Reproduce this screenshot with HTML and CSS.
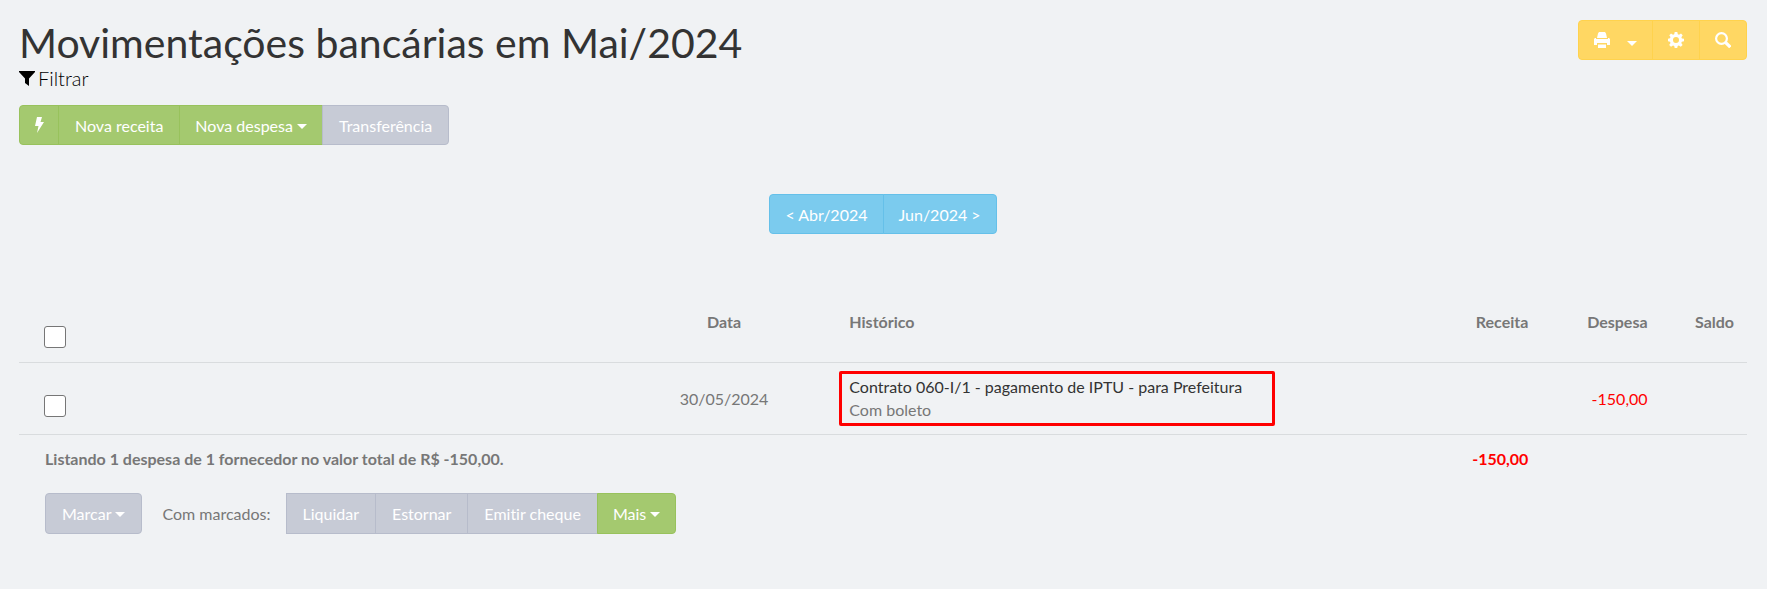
FILE: index.html
```html
<!DOCTYPE html>
<html lang="pt-BR">
<head>
<meta charset="utf-8">
<title>Movimentações bancárias</title>
<link rel="stylesheet" href="styles.css">
</head>
<body>
<main class="page">
  <header class="page-header">
    <div>
      <h1 class="title">Movimentações bancárias em Mai/2024</h1>
      <a class="filter" href="#"><svg class="icon" viewBox="0 0 16 16" aria-hidden="true"><path d="M0 1h16v1L10 8.500V16l-4-3V8.500L0 2z"/></svg>Filtrar</a>
    </div>
    <div class="group">
      <button class="btn yellow print" aria-label="Imprimir"><svg class="icon" viewBox="0 0 16 16" aria-hidden="true"><path d="M5 0h6l1 1.500 1 4.500H3l1-4.500zM0 7l1-1h1v1h12V6h1l1 1v6h-3v-2H3v2H0zM4 12.500h8V16H4z"/></svg><span class="caret"></span></button>
      <button class="btn yellow" aria-label="Configurações"><svg class="icon" viewBox="0 0 16 16" aria-hidden="true"><path fill-rule="evenodd" d="M6.700 0h2.600l.5 2.300 1.200.5 2-1.300 1.700 1.700-1.300 2 .5 1.300 2.100.3v2.500l-2.200.5-.5 1.200 1.300 2-1.800 1.800-2-1.300-1.100.5-.5 2H6.700l-.5-2-1.200-.5-2 1.300L1.200 13l1.300-2-.5-1.200L0 9.300V6.800l2-.5L2.500 5 1.300 3.200 3 1.500l2 1.300 1.200-.5zM8 5a3 3 0 1 0 0 6 3 3 0 0 0 0-6z"/></svg></button>
      <button class="btn yellow" aria-label="Pesquisar"><svg class="icon" viewBox="0 0 16 16" aria-hidden="true"><circle cx="6.500" cy="6.500" r="5.400" fill="none" stroke="currentColor" stroke-width="2.200"/><path d="M9.300 11.500l2.200-2.200 5 4.700-2.300 2.300z"/></svg></button>
    </div>
  </header>

  <div class="group actions">
    <button class="btn green bolt" aria-label="Rápido"><svg class="icon" viewBox="0 0 16 16" aria-hidden="true"><path d="M6 0h5L9.500 5h3.500L6 16l1.500-7H4z"/></svg></button>
    <button class="btn green wide">Nova receita</button>
    <button class="btn green">Nova despesa<span class="caret"></span></button>
    <button class="btn gray wide">Transferência</button>
  </div>

  <nav class="months">
    <div class="group">
      <a class="btn blue" href="#">&lt; Abr/2024</a>
      <a class="btn blue" href="#">Jun/2024 &gt;</a>
    </div>
  </nav>

  <table class="entries">
    <colgroup><col class="c-check"><col class="c-date"><col class="c-history"><col class="c-amount"><col class="c-amount"><col class="c-balance"></colgroup>
    <thead>
      <tr>
        <th class="check"><input type="checkbox" aria-label="Selecionar todos"></th>
        <th class="center">Data</th>
        <th>Histórico</th>
        <th class="right">Receita</th>
        <th class="right">Despesa</th>
        <th class="right">Saldo</th>
      </tr>
    </thead>
    <tbody>
      <tr>
        <td class="check"><input type="checkbox" aria-label="Selecionar lançamento"></td>
        <td class="center">30/05/2024</td>
        <td class="history"><div class="highlight"><a href="#">Contrato 060-I/1 - pagamento de IPTU - para Prefeitura</a><span>Com boleto</span></div></td>
        <td></td>
        <td class="right negative">-150,00</td>
        <td></td>
      </tr>
    </tbody>
    <tfoot>
      <tr>
        <th class="summary" colspan="3">Listando 1 despesa de 1 fornecedor no valor total de R$ -150,00.</th>
        <th class="right negative">-150,00</th>
        <td></td>
        <td></td>
      </tr>
    </tfoot>
  </table>

  <footer class="bulk">
    <button class="btn gray wide single">Marcar<span class="caret"></span></button>
    <span>Com marcados:</span>
    <div class="group joined">
      <button class="btn gray wide">Liquidar</button>
      <button class="btn gray wide">Estornar</button>
      <button class="btn gray wide">Emitir cheque</button>
      <button class="btn green">Mais<span class="caret"></span></button>
    </div>
  </footer>
</main>
</body>
</html>
```
FILE: styles.css
```css
* { box-sizing: border-box; }
body {
  margin: 0;
  background: #f0f2f4;
  color: #777;
  font: 16px/23px Lato, sans-serif;
  font-variant-ligatures: none;
}
a { color: inherit; text-decoration: none; }
.page { padding: 20px 20px 52px 19px; }
.page-header { display: flex; justify-content: space-between; align-items: flex-start; }
.title { margin: 0; color: #333; font-size: 41px; font-weight: 400; line-height: 46px; }
.filter {
  display: flex;
  align-items: center;
  gap: 3px;
  color: #000;
  font-size: 20px;
  font-weight: 300;
  line-height: 24px;
}
.icon { display: block; width: 16px; height: 16px; fill: currentColor; }

.group { display: flex; }
.btn {
  display: flex;
  align-items: center;
  justify-content: center;
  height: 40px;
  padding: 0 15px;
  border: 1px solid;
  color: #fff;
  font: 16px/23px Lato, sans-serif;
  font-variant-ligatures: none;
  white-space: nowrap;
}
.btn + .btn { margin-left: -1px; }
.group .btn:first-child { border-radius: 4px 0 0 4px; }
.group .btn:last-child { border-radius: 0 4px 4px 0; }
.group.joined .btn:first-child { border-radius: 0; }
.single { border-radius: 4px; }
.wide { padding: 0 16px; }
.yellow { background: #ffd763; border-color: #ffd24d; }
.green { background: #a4c96f; border-color: #98c25c; }
.gray { background: #c7cbd6; border-color: #b7bccb; }
.blue { background: #7bcbee; border-color: #65c0e9; }
.print { gap: 17px; }
.bolt { padding: 0 11px; }
.caret {
  margin: 2px 0 0 4px;
  border: 5px solid transparent;
  border-top-color: currentColor;
  border-bottom: 0;
}
.print .caret { margin: 6px 0 0; }

.actions { margin-top: 15px; }
.months { display: flex; justify-content: center; margin-top: 49px; }

.entries { width: 100%; margin-top: 68px; border-collapse: collapse; table-layout: fixed; }
.c-check { width: 34.300%; }
.c-date { width: 13%; }
.c-history { width: 33.900%; }
.c-amount { width: 6.900%; }
.c-balance { width: 5%; }
.entries th, .entries td { padding: 8px 13px; text-align: left; }
.entries thead th { height: 60px; vertical-align: top; }
.entries thead th, .entries tbody td { border-bottom: 1px solid #d9dcde; }
.entries .center { text-align: center; }
.entries .right { text-align: right; }
.entries .negative { color: #f00; }
.entries .check { padding-left: 25px; }
.entries thead .check { padding-top: 24px; padding-bottom: 13px; }
.entries tbody .check { padding-top: 24px; }
.entries .summary { padding-left: 26px; }
.entries tfoot th { padding-top: 12px; }
.entries .history { padding-left: 3px; }
.check input {
  display: block;
  appearance: none;
  width: 22px;
  height: 22px;
  margin: 0;
  border: 1px solid #767676;
  border-radius: 3px;
  background: #fff;
}
.highlight { width: 436px; max-width: 100%; padding: 1px 7px 2px; border: 3px solid #f00; border-radius: 2px; }
.highlight a, .highlight span { display: block; }
.highlight a { color: #333; }

.bulk { display: flex; align-items: center; gap: 20px; margin-top: 15px; padding-left: 26px; }
.bulk .btn { height: 41px; }
.joined { margin-left: -5px; }
```
